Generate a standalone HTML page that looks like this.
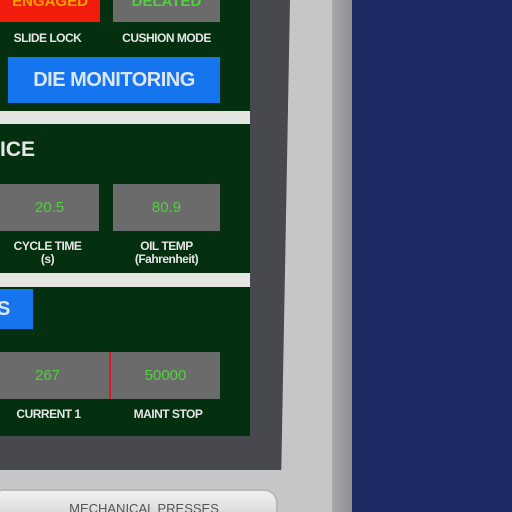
<!DOCTYPE html>
<html style="overflow:hidden;width:512px;height:512px"><head><style>
body{margin:0;width:512px;height:512px;overflow:hidden;background:#1f2964;font-family:"Liberation Sans",sans-serif;position:relative}
div{position:absolute;box-sizing:border-box}
.t{color:#e6e6e6;font-weight:bold;font-size:12px;text-align:center;letter-spacing:-0.5px;line-height:13px}
.g{background:#6b6b6b;color:#4fd23c;font-size:15px;text-align:center}
</style></head><body>
<div style="left:0;top:0;width:352px;height:512px;background:#c6c6c8"></div>
<div style="left:332px;top:0;width:20px;height:512px;background:linear-gradient(90deg,#a8a8aa,#8e8e90)"></div>
<div style="left:0;top:0;width:290px;height:470px;background:#48494f;clip-path:polygon(0 0,100% 0,97% 100%,0 100%)"></div>
<div style="left:0;top:0;width:250px;height:436px;background:#04300f"></div>
<div style="left:0;top:0;width:100px;height:22px;background:#f21c0c;color:#f5a200;font-size:15px;text-align:center;line-height:4px;font-weight:bold">ENGAGED</div>
<div class="g" style="left:113px;top:0;width:107px;height:22px;line-height:4px;font-weight:bold">DELATED</div>
<div class="t" style="left:0;top:32px;width:95px">SLIDE LOCK</div>
<div class="t" style="left:113px;top:32px;width:107px">CUSHION MODE</div>
<div style="left:8px;top:57px;width:212px;height:46px;background:#1475ee;color:#dde6f5;font-weight:bold;font-size:20px;text-align:center;line-height:46px;letter-spacing:-0.5px">DIE MONITORING</div>
<div style="left:0;top:111px;width:250px;height:13px;background:#e4e4e0"></div>
<div style="left:0;top:138px;color:#e6e6e6;font-weight:bold;font-size:21px">ICE</div>
<div class="g" style="left:0;top:184px;width:99px;height:47px;line-height:47px">20.5</div>
<div class="g" style="left:113px;top:184px;width:107px;height:47px;line-height:47px">80.9</div>
<div class="t" style="left:0;top:240px;width:95px">CYCLE TIME<br>(s)</div>
<div class="t" style="left:113px;top:240px;width:107px">OIL TEMP<br>(Fahrenheit)</div>
<div style="left:0;top:273px;width:250px;height:14px;background:#e4e4e0"></div>
<div style="left:0;top:289px;width:33px;height:40px;background:#1475ee;color:#dde6f5;font-weight:bold;font-size:20px;line-height:40px;text-indent:-3px">S</div>
<div class="g" style="left:0;top:352px;width:220px;height:47px"></div>
<div style="left:0;top:352px;width:95px;height:47px;line-height:47px;color:#4fd23c;font-size:15px;text-align:center">267</div>
<div style="left:109px;top:352px;width:2px;height:47px;background:#d02020"></div>
<div style="left:111px;top:352px;width:109px;height:47px;line-height:47px;color:#4fd23c;font-size:15px;text-align:center">50000</div>
<div class="t" style="left:0;top:408px;width:97px">CURRENT 1</div>
<div class="t" style="left:113px;top:408px;width:110px">MAINT STOP</div>
<div style="left:-10px;top:489px;width:288px;height:23px;background:linear-gradient(#f2f2f2,#dcdcde);border-radius:14px 14px 0 0;border:2px solid #b8b8bb;border-bottom:none;color:#555;font-size:13px;text-align:center;line-height:36px;padding-left:20px;overflow:hidden">MECHANICAL PRESSES</div>
</body></html>
